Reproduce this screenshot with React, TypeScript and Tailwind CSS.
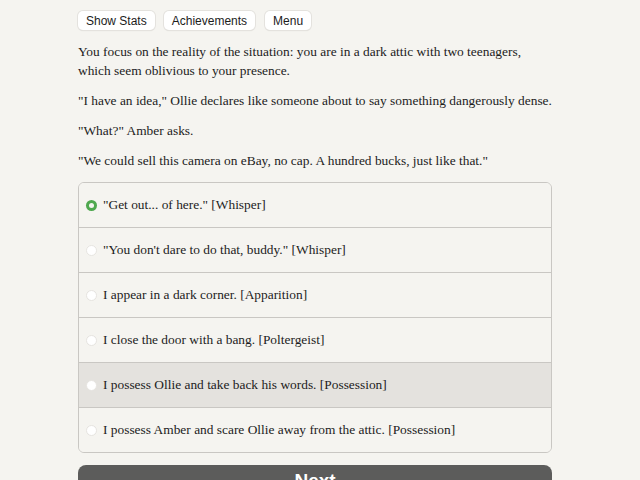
import React, { useState } from 'react';

const choices = [
  '"Get out... of here." [Whisper]',
  '"You don\'t dare to do that, buddy." [Whisper]',
  'I appear in a dark corner. [Apparition]',
  'I close the door with a bang. [Poltergeist]',
  'I possess Ollie and take back his words. [Possession]',
  'I possess Amber and scare Ollie away from the attic. [Possession]',
];

const serif = { fontFamily: '"Liberation Serif", "Times New Roman", serif' };

export default function App() {
  const [selected, setSelected] = useState(0);
  const hovered = 4;

  return (
    <div className="h-screen overflow-hidden bg-[#f5f4f0] text-[#1c1c1c]">
      <div className="w-[474px] ml-[78px] pt-[11px]">
        <div className="flex gap-[8px] font-['Liberation_Sans',Arial,sans-serif] text-[12px]">
          <button className="h-[19px] px-[8px] bg-white rounded-[5px] shadow-[0_0_0_1px_#e4e2de,0_1px_1px_#d8d6d2]">Show Stats</button>
          <button className="h-[19px] px-[8px] ml-[1px] bg-white rounded-[5px] shadow-[0_0_0_1px_#e4e2de,0_1px_1px_#d8d6d2]">Achievements</button>
          <button className="h-[19px] px-[8px] ml-[2px] bg-white rounded-[5px] shadow-[0_0_0_1px_#e4e2de,0_1px_1px_#d8d6d2]">Menu</button>
        </div>

        <div style={serif} className="mt-[12px] text-[13.4px] leading-[19px] flex flex-col gap-[11px]">
          <p>You focus on the reality of the situation: you are in a dark attic with two teenagers, which seem oblivious to your presence.</p>
          <p>"I have an idea," Ollie declares like someone about to say something dangerously dense.</p>
          <p>"What?" Amber asks.</p>
          <p>"We could sell this camera on eBay, no cap. A hundred bucks, just like that."</p>
        </div>

        <div style={serif} className="mt-[12px] border border-[#c9c7c3] rounded-[6px] overflow-hidden text-[13.4px]">
          {choices.map((c, i) => (
            <div
              key={i}
              onClick={() => setSelected(i)}
              className={`h-[44px] flex items-center pl-[7px] gap-[6px] ${i > 0 ? 'border-t border-[#c9c7c3] h-[45px]' : ''} ${i === hovered ? 'bg-[#e4e2de]' : 'bg-[#f5f4f0]'}`}
            >
              {i === selected ? (
                <span className="w-[11px] h-[11px] rounded-full bg-[#4fa84f] flex items-center justify-center">
                  <span className="w-[5px] h-[5px] rounded-full bg-[#f5f4f0]" />
                </span>
              ) : (
                <span className="w-[11px] h-[11px] rounded-full bg-white border border-[#e6e4e0]" />
              )}
              <span>{c}</span>
            </div>
          ))}
        </div>

        <button className="mt-[12px] w-full h-[40px] rounded-[8px] bg-[#5c5c5b] text-white font-['Liberation_Sans',Arial,sans-serif] font-bold text-[19px] pt-[2px] flex justify-center items-start">
          Next
        </button>
      </div>
    </div>
  );
}
